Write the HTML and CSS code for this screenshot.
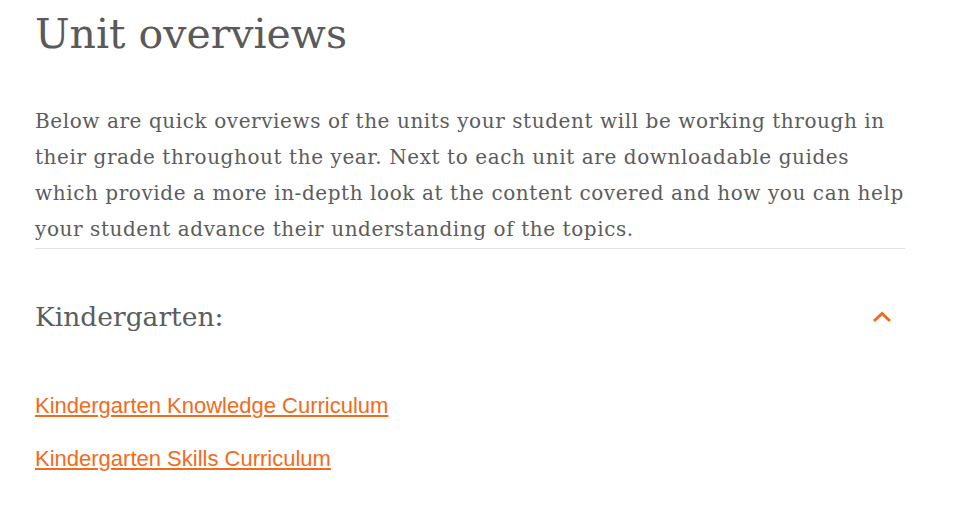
FILE: index.html
```html
<!DOCTYPE html>
<html>
<head>
<meta charset="utf-8">
<link rel="stylesheet" href="styles.css">
</head>
<body>
<main class="page">
  <h1 class="title">Unit overviews</h1>
  <p class="intro">Below are quick overviews of the units your student will be working through in<br>their grade throughout the year. Next to each unit are downloadable guides<br>which provide a more in-depth look at the content covered and how you can help<br>your student advance their understanding of the topics.</p>
  <section class="accordion">
    <div class="acc-head">
      <h2 class="acc-title">Kindergarten:</h2>
      <svg class="chev" width="22" height="12" viewBox="0 0 22 12"><path d="M3 10 L11 2.5 L19 10" fill="none" stroke="#f26b1d" stroke-width="3"/></svg>
    </div>
    <ul class="links">
      <li><a href="#">Kindergarten Knowledge Curriculum</a></li>
      <li><a href="#">Kindergarten Skills Curriculum</a></li>
    </ul>
  </section>
</main>
</body>
</html>
```
FILE: styles.css
```css
html, body { margin: 0; padding: 0; background: #fff; }
.page { width: 870px; margin-left: 35px; color: #5c5c5c; font-family: "DejaVu Serif", serif; }
.title { font-weight: normal; font-size: 41px; line-height: 46px; margin: 11px 0 0; color: #5a5a5a; }
.intro { font-size: 20px; line-height: 36px; letter-spacing: 0.58px; white-space: nowrap; margin: 46px 0 0; color: #5c5c5c; padding-bottom: 1px; border-bottom: 1px solid #e2e2e2; }
.acc-head { display: flex; align-items: center; justify-content: space-between; padding: 52px 12px 0 0; }
.acc-title { font-weight: normal; font-size: 26.5px; margin: 0; color: #5c5c5c; }
.links { list-style: none; margin: 61px 0 0; padding: 0; display: flex; flex-direction: column; gap: 27px; font-family: "Liberation Sans", sans-serif; font-size: 22px; }
.links a { color: #f26b1d; text-decoration: underline; }
```
